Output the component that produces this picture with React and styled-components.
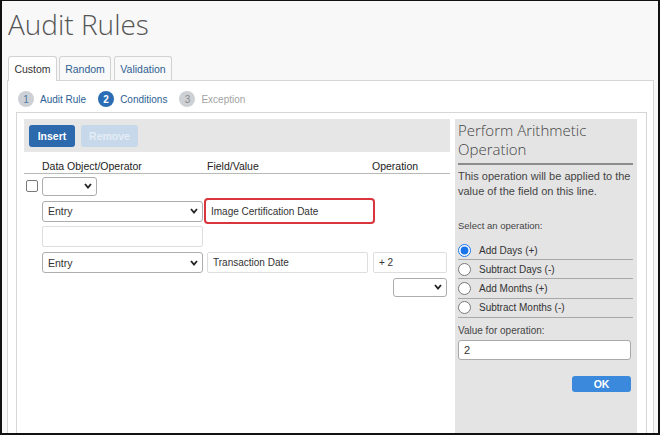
import React from 'react';
import styled, { createGlobalStyle } from 'styled-components';

const GlobalStyle = createGlobalStyle`
  body {
    margin: 0;
    font-family: "Liberation Sans", Arial, sans-serif;
  }
`;

const Frame = styled.div`
  width: 660px;
  height: 435px;
  box-sizing: border-box;
  border: 2px solid #111;
  border-top-width: 1px;
  background: #f8f8f8;
  overflow: hidden;
  display: flex;
  flex-direction: column;
`;

const Title = styled.h1`
  margin: 0;
  padding: 6px 0 0 6px;
  font-family: "Open Sans", sans-serif;
  font-weight: 300;
  font-size: 28px;
  line-height: 34px;
  color: #555;
`;

const TabBar = styled.div`
  display: flex;
  margin-top: 15px;
  padding-left: 6px;
  position: relative;
  z-index: 1;
`;

const Tab = styled.div`
  width: ${({ $w }) => $w}px;
  margin-left: ${({ $ml }) => $ml || 0}px;
  box-sizing: border-box;
  display: flex;
  align-items: center;
  justify-content: center;
  font-size: 10.5px;
  border: 1px solid #d2d2d2;
  border-bottom: none;
  border-radius: 3px 3px 0 0;
  margin-bottom: ${({ $active }) => ($active ? '-1px' : '0')};
  height: ${({ $active }) => ($active ? '25px' : '24px')};
  background: ${({ $active }) => ($active ? '#fff' : '#f9f9f9')};
  color: ${({ $active }) => ($active ? '#333' : '#2f5f93')};
`;

const Panel = styled.div`
  flex: 1;
  display: flex;
  flex-direction: column;
  margin: 0 4px 0 5px;
  padding: 10px 6px 0 8px;
  background: #fff;
  border: 1px solid #d6d6d6;
  border-bottom: none;
`;

const Steps = styled.div`
  display: flex;
  align-items: center;
  height: 16px;
  padding-left: 2px;
`;

const Step = styled.div`
  display: flex;
  align-items: center;
  gap: 6px;
  margin-right: 12px;
  font-size: 10px;
  color: ${({ $state }) => ($state === 'todo' ? '#a2a2a2' : '#2d5f95')};
`;

const StepNum = styled.span`
  width: 16px;
  height: 16px;
  border-radius: 50%;
  display: flex;
  align-items: center;
  justify-content: center;
  font-size: 10px;
  font-weight: ${({ $state }) => ($state === 'current' ? 'bold' : 'normal')};
  background: ${({ $state }) => ($state === 'current' ? '#2a6db4' : '#cdd0d4')};
  color: ${({ $state }) =>
    $state === 'current' ? '#fff' : $state === 'done' ? '#4f7aa6' : '#8a8a8a'};
`;

const InnerBox = styled.div`
  flex: 1;
  display: flex;
  gap: 5px;
  margin: 5px 0 -10px;
  padding: 6px 9px 0 7px;
  border: 1px solid #d6d6d6;
`;

const LeftCol = styled.div`
  width: 426px;
`;

const Toolbar = styled.div`
  height: 33px;
  box-sizing: border-box;
  background: #e6e6e6;
  display: flex;
  align-items: center;
  gap: 6px;
  padding-left: 5px;
`;

const Button = styled.button`
  width: ${({ $w }) => $w}px;
  height: 22px;
  padding: 0;
  border: none;
  border-radius: 3px;
  font-family: inherit;
  font-size: 10.5px;
  font-weight: bold;
  background: ${({ $disabled }) => ($disabled ? '#c6d8ea' : '#2c69ad')};
  color: ${({ $disabled }) => ($disabled ? '#e4edf6' : '#fff')};
`;

const GridRow = styled.div`
  display: grid;
  grid-template-columns: 18px 163px 167px 78px;
  align-items: center;
  height: ${({ $h }) => $h}px;
  margin-top: ${({ $mt }) => $mt}px;
`;

const HeaderRow = styled(GridRow)`
  height: 15px;
  padding-top: 6px;
  border-bottom: 1px solid #b8b8b8;
  font-size: 10.5px;
  color: #222;
`;

const HeadCell = styled.div`
  grid-column: ${({ $col }) => $col};
  margin-left: ${({ $ml }) => $ml || 0}px;
`;

const Check = styled.input`
  appearance: none;
  margin: 0 0 0 2px;
  width: 12px;
  height: 12px;
  border: 1px solid #7a7a7a;
  border-radius: 2px;
  background: #fff;
`;

const SelectWrap = styled.div`
  position: relative;
  grid-column: ${({ $col }) => $col};
  width: ${({ $w }) => $w}px;
  height: ${({ $h }) => $h}px;
  margin-left: ${({ $ml }) => $ml || 0}px;
`;

const Select = styled.select`
  appearance: none;
  width: 100%;
  height: 100%;
  box-sizing: border-box;
  border: 1px solid #adadad;
  border-radius: 3px;
  background: #fff;
  padding: 0 0 0 5px;
  font-family: inherit;
  font-size: 10.5px;
  color: #333;
`;

const Chevron = styled.svg`
  position: absolute;
  right: 5px;
  top: 50%;
  margin-top: -3px;
  pointer-events: none;
`;

const TextInput = styled.input`
  grid-column: ${({ $col }) => $col};
  width: ${({ $w }) => $w}px;
  height: ${({ $h }) => $h}px;
  margin: 0 0 0 ${({ $ml }) => $ml || 0}px;
  box-sizing: border-box;
  padding: 0 0 0 5px;
  border: ${({ $alert }) => ($alert ? '2px solid #d8363c' : '1px solid #dedede')};
  border-radius: ${({ $alert }) => ($alert ? '4px' : '2px')};
  background: #fff;
  font-family: inherit;
  font-size: 10px;
  color: #333;
  outline: none;
`;

const SidePanel = styled.div`
  width: 183px;
  box-sizing: border-box;
  background: #e4e4e4;
  padding: 2px 4px 0 3px;
`;

const SideTitle = styled.div`
  font-family: "Open Sans", sans-serif;
  font-weight: 300;
  font-size: 15px;
  line-height: 19px;
  color: #444;
  padding-bottom: 4px;
  border-bottom: 2px solid #8c8c8c;
`;

const Desc = styled.p`
  margin: 4px 0 0;
  font-size: 11px;
  line-height: 15px;
  color: #444;
`;

const Label = styled.div`
  margin-top: ${({ $mt }) => $mt}px;
  font-size: ${({ $size }) => $size}px;
  line-height: 14px;
  color: #444;
`;

const RadioList = styled.div`
  margin-top: 8px;
`;

const RadioRow = styled.label`
  display: flex;
  align-items: center;
  gap: 8px;
  height: 18px;
  border-bottom: 1px solid #a8a8a8;
  margin-bottom: 0.3px;
  font-size: 10px;
  color: #333;
`;

const Radio = styled.input`
  margin: 0;
  width: 13px;
  height: 13px;
  accent-color: #1a73e8;
`;

const ValueInput = styled.input`
  display: block;
  margin-top: 2px;
  width: 173px;
  height: 20px;
  box-sizing: border-box;
  padding: 0 5px;
  border: 1px solid #a9a9a9;
  border-radius: 3px;
  font-family: inherit;
  font-size: 11px;
  color: #333;
  background: #fff;
`;

const OkRow = styled.div`
  display: flex;
  justify-content: flex-end;
  width: 173px;
  margin-top: 16px;
`;

const OkButton = styled.button`
  width: 59px;
  height: 16px;
  border: none;
  border-radius: 3px;
  background: #3b89dc;
  color: #fff;
  font-family: inherit;
  font-size: 10.5px;
  font-weight: bold;
  padding: 0;
`;

const ChevronIcon = () => (
  <Chevron width="8" height="6" viewBox="0 0 8 6">
    <polyline points="1,1 4,4.5 7,1" fill="none" stroke="#222" strokeWidth="1.8" />
  </Chevron>
);

const Dropdown = ({ col, w, h, ml, value }) => (
  <SelectWrap $col={col} $w={w} $h={h} $ml={ml}>
    <Select defaultValue={value}>
      <option value={value}>{value}</option>
    </Select>
    <ChevronIcon />
  </SelectWrap>
);

const operations = ['Add Days (+)', 'Subtract Days (-)', 'Add Months (+)', 'Subtract Months (-)'];

export default function App() {
  return (
    <>
      <GlobalStyle />
      <Frame>
        <Title>Audit Rules</Title>
        <TabBar>
          <Tab $active $w={49}>Custom</Tab>
          <Tab $w={52} $ml={2}>Random</Tab>
          <Tab $w={58} $ml={3}>Validation</Tab>
        </TabBar>
        <Panel>
          <Steps>
            <Step $state="done"><StepNum $state="done">1</StepNum>Audit Rule</Step>
            <Step $state="current"><StepNum $state="current">2</StepNum>Conditions</Step>
            <Step $state="todo"><StepNum $state="todo">3</StepNum>Exception</Step>
          </Steps>
          <InnerBox>
            <LeftCol>
              <Toolbar>
                <Button $w={46}>Insert</Button>
                <Button $disabled $w={57}>Remove</Button>
              </Toolbar>
              <HeaderRow>
                <HeadCell $col={2}>Data Object/Operator</HeadCell>
                <HeadCell $col={3} $ml={2}>Field/Value</HeadCell>
                <HeadCell $col={4}>Operation</HeadCell>
              </HeaderRow>
              <GridRow $h={19} $mt={2}>
                <Check type="checkbox" />
                <Dropdown col={2} w={55} h={19} value="" />
              </GridRow>
              <GridRow $h={26} $mt={3}>
                <Dropdown col={2} w={161} h={21} value="Entry" />
                <TextInput $col={3} $w={171} $h={26} $ml={-1} $alert defaultValue="Image Certification Date" />
              </GridRow>
              <GridRow $h={21} $mt={2}>
                <TextInput $col={2} $w={161} $h={21} />
              </GridRow>
              <GridRow $h={21} $mt={5}>
                <Dropdown col={2} w={161} h={21} value="Entry" />
                <TextInput $col={3} $w={161} $h={21} $ml={2} defaultValue="Transaction Date" />
                <TextInput $col={4} $w={74} $h={21} $ml={1} defaultValue="+ 2" />
              </GridRow>
              <GridRow $h={19} $mt={4}>
                <Dropdown col={4} w={54} h={19} ml={21} value="" />
              </GridRow>
            </LeftCol>
            <SidePanel>
              <SideTitle>Perform Arithmetic<br />Operation</SideTitle>
              <Desc>This operation will be applied to the value of the field on this line.</Desc>
              <Label $mt={20} $size={9.5}>Select an operation:</Label>
              <RadioList>
                {operations.map((op, i) => (
                  <RadioRow key={op}>
                    <Radio type="radio" name="op" defaultChecked={i === 0} />
                    {op}
                  </RadioRow>
                ))}
              </RadioList>
              <Label $mt={6} $size={10}>Value for operation:</Label>
              <ValueInput defaultValue="2" />
              <OkRow>
                <OkButton>OK</OkButton>
              </OkRow>
            </SidePanel>
          </InnerBox>
        </Panel>
      </Frame>
    </>
  );
}
